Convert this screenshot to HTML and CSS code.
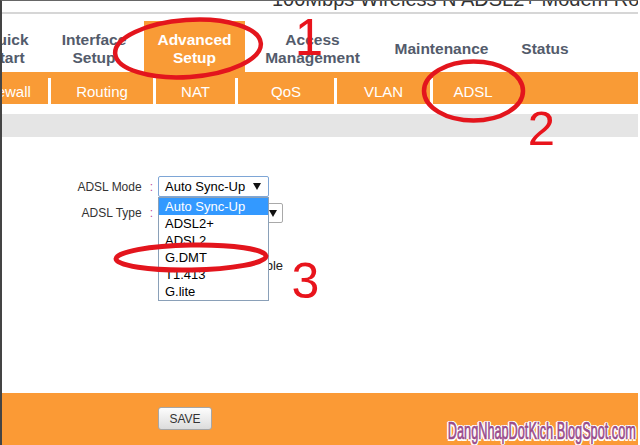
FILE: index.html
```html
<!DOCTYPE html>
<html>
<head>
<meta charset="utf-8">
<title>ADSL</title>
<link rel="stylesheet" href="styles.css">
</head>
<body>
<div class="page">
  <div class="titlebar"><span class="title">100Mbps Wireless N ADSL2+ Modem Router</span></div>
  <nav class="tabs">
    <div class="tab w-quick">Quick<br>Start</div>
    <div class="tab w-iface">Interface<br>Setup</div>
    <div class="tab w-adv active">Advanced<br>Setup</div>
    <div class="tab w-access">Access<br>Management</div>
    <div class="tab w-maint">Maintenance</div>
    <div class="tab w-status">Status</div>
  </nav>
  <nav class="subtabs">
    <div class="sub s-fw first">Firewall</div>
    <div class="sub s-rt">Routing</div>
    <div class="sub s-nat">NAT</div>
    <div class="sub s-qos">QoS</div>
    <div class="sub s-vlan">VLAN</div>
    <div class="sub s-adsl">ADSL</div>
  </nav>
  <div class="graybar"></div>
  <main class="content">
    <div class="row r1">
      <div class="label">ADSL Mode<span class="colon">:</span></div>
      <div class="sel sel-mode">
        <span>Auto Sync-Up</span>
        <svg class="arrow" width="8" height="7" viewBox="0 0 8 7"><path d="M0 0H8L4 7Z" fill="#111"/></svg>
        <div class="dropdown">
          <div class="opt on">Auto Sync-Up</div>
          <div class="opt">ADSL2+</div>
          <div class="opt">ADSL2</div>
          <div class="opt">G.DMT</div>
          <div class="opt">T1.413</div>
          <div class="opt">G.lite</div>
        </div>
      </div>
    </div>
    <div class="row r2">
      <div class="label">ADSL Type<span class="colon">:</span></div>
      <div class="sel sel-type">
        <span>ANNEX A</span>
        <svg class="arrow" width="8" height="7" viewBox="0 0 8 7"><path d="M0 0H8L4 7Z" fill="#111"/></svg>
      </div>
    </div>
    <div class="row r3">
      <div class="label"></div>
      <div class="opttext">Enable</div>
    </div>
  </main>
  <footer class="footer"><button class="save">SAVE</button></footer>
</div>
<div class="watermark">DangNhapDotKich.BlogSpot.com</div>
<svg class="annot" width="640" height="445" viewBox="0 0 640 445">
  <ellipse cx="188" cy="48.5" rx="73" ry="28.5" transform="rotate(-4 188 48.5)" fill="none" stroke="#e3151d" stroke-width="4.5"/>
  <ellipse cx="473.5" cy="91" rx="49.5" ry="29.5" fill="none" stroke="#e3151d" stroke-width="4.5"/>
  <ellipse cx="191" cy="257.5" rx="75" ry="12.5" transform="rotate(-1 191 257.5)" fill="none" stroke="#e3151d" stroke-width="5"/>
  <text x="309" y="55" class="num" font-size="51">1</text>
  <text x="541.5" y="145" class="num" font-size="49">2</text>
  <text x="305.5" y="298" class="num" font-size="50">3</text>
</svg>
</body>
</html>
```
FILE: styles.css
```css
* { box-sizing: border-box; }
html, body { margin: 0; padding: 0; }
body {
  width: 640px;
  height: 445px;
  overflow: hidden;
  position: relative;
  background: #fff;
  font-family: "Liberation Sans", Arial, sans-serif;
}
.page {
  width: 638px;
  height: 445px;
  border-left: 2px solid #444;
  border-top: 1px solid #666;
  overflow: hidden;
  display: flex;
  flex-direction: column;
}
.titlebar {
  flex-shrink: 0;
  height: 13px;
  border-bottom: 2px solid #d6d6d6;
  overflow: hidden;
  padding-left: 270px;
}
.title {
  display: block;
  font-size: 20px;
  line-height: 20px;
  margin-top: -12px;
  color: #333;
  white-space: nowrap;
}
.tabs {
  flex-shrink: 0;
  display: flex;
  height: 51px;
  margin-top: 7px;
  margin-left: -32px;
}
.tab {
  flex-shrink: 0;
  display: flex;
  align-items: center;
  justify-content: center;
  text-align: center;
  padding-top: 5px;
  font-size: 15.5px;
  font-weight: bold;
  line-height: 18px;
  color: #535b6b;
}
.tab.active { background: #f99b36; color: #fff; }
.w-quick { width: 74px; }
.w-iface { width: 100px; }
.w-adv { width: 101px; }
.w-access { width: 135px; }
.w-maint { width: 123px; }
.w-status { width: 84px; }
.subtabs {
  flex-shrink: 0;
  display: flex;
  height: 32px;
  padding-top: 6px;
  margin-left: -40px;
  background: #f99b36;
}
.sub {
  flex-shrink: 0;
  display: flex;
  align-items: center;
  justify-content: center;
  border-left: 3px solid #fff;
  color: #fff;
  font-size: 15px;
}
.sub.first { border-left: 0; }
.s-fw { width: 86px; }
.s-rt { width: 105px; }
.s-nat { width: 82px; }
.s-qos { width: 99px; }
.s-vlan { width: 96px; }
.s-adsl { width: 83px; }
.graybar {
  flex-shrink: 0;
  margin-top: 10px;
  height: 23px;
  background: #e5e5e5;
}
.content {
  flex: 1;
  padding-top: 39px;
}
.row { display: flex; align-items: center; }
.r1 { height: 21px; }
.r2 { height: 20px; margin-top: 6px; }
.r3 { height: 20px; margin-top: 32px; }
.label {
  width: 151px;
  margin-right: 5px;
  text-align: right;
  font-size: 12px;
  color: #333;
  white-space: nowrap;
}
.colon { margin-left: 8px; color: #c0509e; }
.sel {
  position: relative;
  display: flex;
  align-items: center;
  height: 100%;
  padding-left: 6px;
  background: #fff;
  border-radius: 2px;
  font-size: 13px;
  color: #000;
  white-space: nowrap;
}
.sel-mode { width: 111px; border: 1px solid #7ea6d6; z-index: 2; }
.sel-type { width: 125px; border: 1px solid #a9a9a9; }
.arrow { margin-left: auto; flex-shrink: 0; }
.sel-mode .arrow { margin-right: 7px; }
.sel-type .arrow { margin-right: 5px; }
.dropdown {
  position: absolute;
  left: -1px;
  top: 20px;
  width: 111px;
  border: 1px solid #8aa0b8;
  background: #fff;
}
.opt {
  height: 17px;
  line-height: 17px;
  padding-left: 6px;
  font-size: 13px;
  color: #000;
}
.opt.on { background: #3399ff; color: #fff; }
.opttext {
  width: 125px;
  text-align: right;
  font-size: 13px;
  color: #222;
}
.footer {
  flex-shrink: 0;
  height: 52px;
  background: #fb9a35;
  padding: 14px 0 0 156px;
}
.save {
  width: 54px;
  height: 23px;
  margin: 0;
  padding: 0;
  border: 1px solid #a6a6a6;
  border-radius: 3px;
  background: linear-gradient(#fdfdfd, #dcdcdc);
  font-family: "Liberation Sans", Arial, sans-serif;
  font-size: 12px;
  color: #333;
}
.watermark {
  position: absolute;
  right: 4px;
  bottom: 2px;
  font-family: "Liberation Sans", sans-serif;
  font-size: 24px;
  line-height: 24px;
  color: #9a4a8a;
  white-space: nowrap;
  transform: scaleX(0.53);
  transform-origin: right bottom;
  -webkit-text-stroke: 0.7px #9a4a8a;
  text-shadow: 1.5px 0 0 #fff, -1.5px 0 0 #fff, 0 1.5px 0 #fff, 0 -1.5px 0 #fff,
    1.5px 1.5px 0 #fff, -1.5px -1.5px 0 #fff, 1.5px -1.5px 0 #fff, -1.5px 1.5px 0 #fff,
    3px 0 0 #fff, -3px 0 0 #fff;
}
.annot {
  position: absolute;
  left: 0;
  top: 0;
  z-index: 10;
  pointer-events: none;
}
.num {
  font-family: "Liberation Sans", Arial, sans-serif;
  fill: #e8141c;
  text-anchor: middle;
}
```
